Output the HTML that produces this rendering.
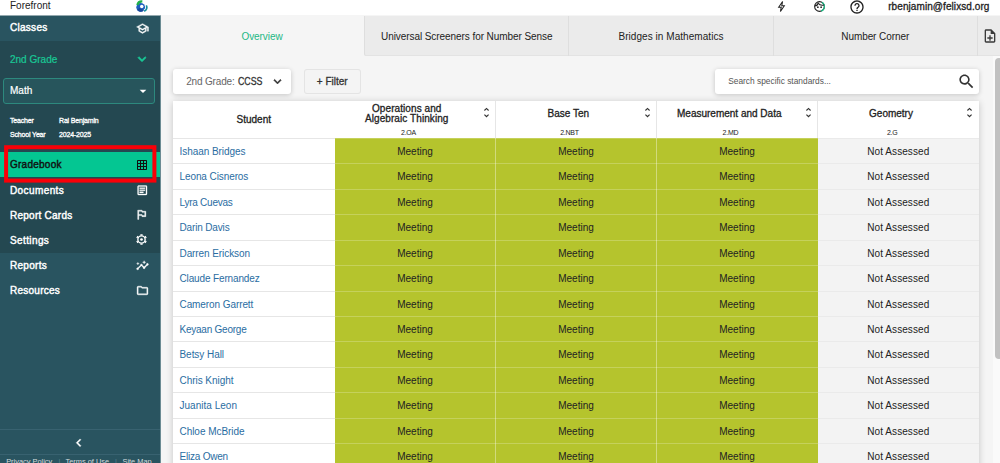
<!DOCTYPE html>
<html><head><meta charset="utf-8">
<style>
*{box-sizing:border-box;margin:0;padding:0}
html,body{width:1000px;height:463px;overflow:hidden;background:#f5f5f5;font-family:"Liberation Sans",sans-serif;color:#222}
.abs{position:absolute}
.med{-webkit-text-stroke:0.3px currentColor}
#top{position:absolute;left:0;top:0;width:1000px;height:15px;background:#fff}
#top .brand{position:absolute;left:10px;top:-2px;font-size:10px;color:#222;line-height:15px}
#top .mail{position:absolute;left:888.2px;top:-1.5px;font-size:10px;color:#222;line-height:15px;letter-spacing:.08px}
#side{position:absolute;left:0;top:15px;width:160px;height:448px;background:#295460;color:#fff}
#side .dark{position:absolute;left:0;top:26px;width:160px;height:211.5px;background:#244851}
.navt{position:absolute;left:10px;font-size:10px;letter-spacing:.28px;color:#fff;line-height:14px;white-space:nowrap}
.navt.med{-webkit-text-stroke:0.42px currentColor}
#mathbox{position:absolute;left:3px;top:63px;width:152px;height:25.5px;border:1px solid #2d897e;border-radius:3px;background:#27555c}
#grade{position:absolute;left:0;top:137px;width:160px;height:25px;background:#04c692}
#redbox{position:absolute;left:4.5px;top:130.5px;width:152px;height:37.5px;border:4px solid #e9001b}
.small{position:absolute;font-size:7px;letter-spacing:-.17px;color:#fff;line-height:9px;white-space:nowrap}
#foot{position:absolute;left:0;top:414px;width:160px;height:25.5px;border-top:1px solid #386270;border-bottom:1px solid #386270}
#foot2{position:absolute;left:0;top:441.500px;width:160px;font-size:7.4px;line-height:10px;color:#d3dbde;white-space:nowrap}
#foot2 span{position:absolute;top:0}
#main{position:absolute;left:160px;top:15px;width:840px;height:448px;background:#f5f5f5}
.tab{position:absolute;top:0.5px;height:40.5px;background:#ebebeb;border-left:1px solid #dedede;font-size:10px;letter-spacing:-.07px;text-align:center;line-height:41px;color:#222;white-space:nowrap;box-shadow:inset 0 -1px 0 #e3e3e3}
.tab.on{background:#f5f5f5;color:#1db885;border:none;box-shadow:none}
.btn{position:absolute;background:#fff;border-radius:3px;font-size:10px;line-height:25px;height:24.700px;white-space:nowrap}
#tbl{position:absolute;left:13px;top:85.5px;width:806px;height:380px;background:#fff;box-shadow:0 1px 7px rgba(0,0,0,.2)}
.hd{position:absolute;top:0;height:37.5px;text-align:center;font-size:10px;color:#222}
.hd .t{position:absolute;left:0;right:14.500px;white-space:nowrap}
.hd .sub{position:absolute;left:0;right:12px;top:28px;font-size:7px;letter-spacing:-.22px;line-height:8px;-webkit-text-stroke:0}
.sort{position:absolute;right:1.300px;top:5.700px}
.row{position:absolute;left:0;width:806px;height:25.45px}
.row:before{content:"";position:absolute;left:0;top:0;width:161.5px;height:1px;background:#e6e6e6}
.row .nm{position:absolute;left:6.5px;top:0;line-height:27.5px;font-size:10px;color:#2a6da2;white-space:nowrap;letter-spacing:.05px}
.cell{position:absolute;top:0;height:25.45px}
.cell:before{content:"";position:absolute;left:0;top:0;right:0;height:1px;background:rgba(255,255,255,.22)}
.ct{position:absolute;top:0;height:25.45px;line-height:27.5px;font-size:10px;text-align:center;color:#222}
.vl{position:absolute;top:37.500px;width:1px;height:345px;background:rgba(255,255,255,.38)}
.g{background:#b5c42d}
.n{background:#f3f3f3}
.n:before{background:#eaeaea}
</style></head><body>
<div id="top"><div class="brand">Forefront</div><div class="mail med">rbenjamin@felixsd.org</div>
<svg class="abs" style="left:135px;top:0" width="14" height="13" viewBox="0 0 14 13"><circle cx="5.700" cy="7.300" r="4.400" fill="#1e5fbe"/><path d="M2 9.800 A4.400 4.400 0 0 0 8.500 10.700 L7 8.500 A2 2 0 0 1 4.500 8 Z" fill="#17479a"/><path d="M11.300 5.300 C12.600 7.600 11.600 10.100 9.200 11.300" fill="none" stroke="#fff" stroke-width="3"/><path d="M11.300 5.300 C12.600 7.600 11.600 10.100 9.200 11.300" fill="none" stroke="#148c9c" stroke-width="1.700"/><path d="M2.400 5 A4.600 4.600 0 0 1 7.300 1.500" fill="none" stroke="#21b04b" stroke-width="2.300"/><circle cx="6.750" cy="6.600" r="1.750" fill="#fff"/></svg>
<svg class="abs" style="left:848.6px;top:-1.5px" width="16" height="16" viewBox="0 0 24 24"><path d="M11 18h2v-2h-2v2zm1-16C6.48 2 2 6.48 2 12s4.48 10 10 10 10-4.48 10-10S17.52 2 12 2zm0 18c-4.41 0-8-3.59-8-8s3.59-8 8-8 8 3.59 8 8-3.59 8-8 8zm0-14c-2.21 0-4 1.79-4 4h2c0-1.1.9-2 2-2s2 .9 2 2c0 2-3 1.75-3 5h2c0-2.25 3-2.5 3-5 0-2.21-1.79-4-4-4z" fill="#222"/></svg>
<svg class="abs" style="left:812.600px;top:0" width="13" height="13" viewBox="0 0 24 24"><circle cx="12" cy="12" r="9" fill="none" stroke="#222" stroke-width="2"/><path d="M16.500 4.200 A9 9 0 0 1 15 20.500" fill="none" stroke="#1db885" stroke-width="2.100"/><path d="M3.500 11 C7 10.300 9 8.500 9.600 6 C11.500 8.600 15.500 10.300 19.800 9.400" fill="none" stroke="#222" stroke-width="2.200"/><circle cx="9" cy="13.200" r="1.600" fill="#222"/><circle cx="15" cy="13.200" r="1.600" fill="#222"/></svg>
<svg class="abs" style="left:774.5px;top:-0.25px" width="13" height="13" viewBox="0 0 24 24"><path d="M14 2.800L6.800 13.200h4.700L10 21.200l7.200-10.400h-4.700z" fill="none" stroke="#222" stroke-width="1.900" stroke-linejoin="miter"/></svg>
</div>
<div id="side">
 <div class="dark"></div>
 <div class="navt med" style="top:6.4px">Classes</div>
 <div class="navt" style="top:37.7px;color:#19c896;letter-spacing:0;-webkit-text-stroke:.2px #19c896">2nd Grade</div>
 <div id="mathbox"><div class="navt" style="left:6px;top:5.400px;letter-spacing:0;-webkit-text-stroke:.2px #fff">Math</div></div>
 <div class="small med" style="left:10px;top:100.700px">Teacher</div><div class="small med" style="left:59px;top:100.700px">Rai Benjamin</div>
 <div class="small med" style="left:10px;top:115px">School Year</div><div class="small med" style="left:59px;top:115px">2024-2025</div>
 <div id="grade"><div class="navt med" style="top:6px;color:#111;letter-spacing:.25px">Gradebook</div></div>
 <svg class="abs" style="left:0;top:125px" width="160" height="50" viewBox="0 0 160 50"><rect x="6.100" y="7.200" width="148.300" height="33.400" fill="none" stroke="#fa0008" stroke-width="4"/></svg>
 <div class="navt med" style="top:168.600px;letter-spacing:.4px">Documents</div>
 <div class="navt med" style="top:193.700px;letter-spacing:.25px">Report Cards</div>
 <div class="navt med" style="top:218.700px;letter-spacing:.39px">Settings</div>
 <div class="navt med" style="top:243.700px">Reports</div>
 <div class="navt med" style="top:268.700px;letter-spacing:.25px">Resources</div>
 <svg class="abs" style="left:135.5px;top:6.6px" width="13" height="13" viewBox="0 0 24 24"><path d="M12 3L1 9l4 2.18v6L12 21l7-3.82v-6l2-1.09V17h2V9L12 3zm6.82 6L12 12.72 5.18 9 12 5.28 18.82 9zM17 15.99l-5 2.73-5-2.73v-3.72L12 15l5-2.73v3.72z" fill="#fff" stroke="#fff" stroke-width="0.7"/></svg>
 <svg class="abs" style="left:133.9px;top:36.1px" width="16" height="16" viewBox="0 0 24 24"><path d="M16.59 8.59L12 13.17 7.41 8.59 6 10l6 6 6-6z" fill="#19c896" stroke="#19c896" stroke-width="1.1"/></svg>
 <svg class="abs" style="left:135.4px;top:67.8px" width="16" height="16" viewBox="0 0 24 24"><path d="M7 10l5 5 5-5z" fill="#fff"/></svg>
 <svg class="abs" style="left:136px;top:144.3px" width="12" height="12" viewBox="0 0 24 24"><path d="M20 2H4c-1.1 0-2 .9-2 2v16c0 1.1.9 2 2 2h16c1.1 0 2-.9 2-2V4c0-1.1-.9-2-2-2zM8 20H4v-4h4v4zm0-6H4v-4h4v4zm0-6H4V4h4v4zm6 12h-4v-4h4v4zm0-6h-4v-4h4v4zm0-6h-4V4h4v4zm6 12h-4v-4h4v4zm0-6h-4v-4h4v4zm0-6h-4V4h4v4z" fill="#111"/></svg>
 <svg class="abs" style="left:135.6px;top:168.8px" width="12.6" height="12.6" viewBox="0 0 24 24"><path d="M19 5v14H5V5h14m0-2H5c-1.1 0-2 .9-2 2v14c0 1.1.9 2 2 2h14c1.1 0 2-.9 2-2V5c0-1.1-.9-2-2-2zM14 17H7v-2h7v2zm3-4H7v-2h10v2zm0-4H7V7h10v2z" fill="#fff" stroke="#fff" stroke-width="0.6"/></svg>
 <svg class="abs" style="left:135.4px;top:193.2px" width="13" height="13" viewBox="0 0 24 24"><path d="M14 6l-1-2H5v17h2v-7h5l1 2h7V6h-6zm4 8h-4l-1-2H7V6h5l1 2h5v6z" fill="#fff" stroke="#fff" stroke-width="0.7"/></svg>
 <svg class="abs" style="left:135.300px;top:218.300px" width="13" height="13" viewBox="0 0 24 24"><circle cx="12" cy="12" r="6.700" fill="none" stroke="#fff" stroke-width="2.500"/><path d="M12.00 4.40L12.00 2.10M5.42 8.20L3.43 7.05M5.42 15.80L3.43 16.95M12.00 19.60L12.00 21.90M18.58 15.80L20.57 16.95M18.58 8.20L20.57 7.05" fill="none" stroke="#fff" stroke-width="4.200"/><circle cx="12" cy="12" r="2.500" fill="#fff"/></svg>
 <svg class="abs" style="left:135.5px;top:244px" width="13" height="13" viewBox="0 0 24 24"><path d="M21 8c-1.45 0-2.26 1.44-1.93 2.51l-3.55 3.56c-.3-.09-.74-.09-1.04 0l-2.55-2.55C12.27 10.45 11.46 9 10 9c-1.45 0-2.27 1.44-1.93 2.52l-4.56 4.55C2.44 15.74 1 16.55 1 18c0 1.1.9 2 2 2 1.45 0 2.26-1.44 1.93-2.51l4.55-4.56c.3.09.74.09 1.04 0l2.55 2.55C12.73 16.55 13.54 18 15 18c1.45 0 2.27-1.44 1.93-2.52l3.56-3.55c1.07.33 2.51-.48 2.51-1.93 0-1.1-.9-2-2-2zM15 9l.94-2.07L18 6l-2.06-.93L15 3l-.92 2.07L12 6l2.08.93zM3.5 11L4 9l2-.5L4 8l-.5-2L3 8l-2 .5L3 9z" fill="#fff" stroke="#fff" stroke-width="0.5"/></svg>
 <svg class="abs" style="left:135.5px;top:269.1px" width="13" height="13" viewBox="0 0 24 24"><path d="M9.17 6l2 2H20v10H4V6h5.17M10 4H4c-1.1 0-1.99.9-1.99 2L2 18c0 1.1.9 2 2 2h16c1.1 0 2-.9 2-2V8c0-1.1-.9-2-2-2h-8l-2-2z" fill="#fff" stroke="#fff" stroke-width="0.7"/></svg>
 <div id="foot"></div>
 <svg class="abs" style="left:71.4px;top:419.65px" width="15.5" height="15.5" viewBox="0 0 24 24"><path d="M15.41 7.41L14 6l-6 6 6 6 1.41-1.41L10.83 12z" fill="#fff" stroke="#fff" stroke-width="0.6"/></svg>
 <div id="foot2"><span style="left:6.200px">Privacy Policy</span><span style="left:58.500px;color:#55808d">|</span><span style="left:65.500px">Terms of Use</span><span style="left:115px;color:#55808d">|</span><span style="left:122.500px">Site Map</span></div>
</div>
<div class="abs" style="left:160px;top:15px;width:1px;height:448px;background:#6b8b93;z-index:5"></div>
<div class="abs" style="left:0;top:15px;width:161px;height:1px;background:#94a9af;z-index:5"></div>
<div id="main">
 <div class="tab on" style="left:0;width:204px">Overview</div>
 <div class="tab" style="left:204px;width:204.500px;border-bottom-left-radius:2px">Universal Screeners for Number Sense</div>
 <div class="tab" style="left:408px;width:205px;letter-spacing:.05px">Bridges in Mathematics</div>
 <div class="tab" style="left:613px;width:203.500px">Number Corner</div>
 <div class="tab" style="left:816.500px;width:23.500px"></div>
 <svg class="abs" style="left:821.8px;top:13px" width="16" height="16" viewBox="0 0 24 24"><path d="M13 11h-2v3H8v2h3v3h2v-3h3v-2h-3zm1-9H6c-1.100 0-2 .9-2 2v16c0 1.100.89 2 1.990 2H18c1.100 0 2-.9 2-2V8l-6-6zm4 18H6V4h7v5h5v11z" fill="#3a3a3a"/></svg>
 <div class="btn" style="left:13px;top:54.200px;width:118px;padding-left:13.200px;color:#666;letter-spacing:-.17px;box-shadow:0 1px 5px rgba(0,0,0,.2)">2nd Grade: <span class="med" style="position:absolute;left:65px;top:0;color:#333;letter-spacing:0;transform:scaleX(.88);transform-origin:0 50%">CCSS</span></div>
 <svg class="abs" style="left:110px;top:59.2px" width="15" height="15" viewBox="0 0 24 24"><path d="M16.59 8.59L12 13.17 7.41 8.59 6 10l6 6 6-6z" fill="#333" stroke="#333" stroke-width="0.7"/></svg>
 <div class="btn med" style="left:143.750px;top:54.200px;width:57px;height:25px;font-size:10px;text-align:center;background:#f4f4f4;box-shadow:inset 0 0 0 1px #e4e4e4;line-height:25px;color:#333">+ Filter</div>
 <div class="btn" style="left:555px;top:54.200px;width:264px;padding-left:13.200px;font-size:8.370px;color:#555;box-shadow:0 1px 5px rgba(0,0,0,.2)">Search specific standards...</div>
 <svg class="abs" style="left:797.1px;top:57.3px" width="19" height="19" viewBox="0 0 24 24"><path d="M15.500 14h-.79l-.28-.27C15.410 12.590 16 11.110 16 9.500 16 5.910 13.090 3 9.500 3S3 5.910 3 9.500 5.910 16 9.500 16c1.610 0 3.090-.59 4.230-1.570l.27.28v.79l5 4.990L20.490 19l-4.990-5zm-6 0C7.010 14 5 11.990 5 9.500S7.010 5 9.500 5 14 7.010 14 9.500 11.990 14 9.500 14z" fill="#333"/></svg>
 <div id="tbl">
  <div class="hd med" style="left:0;width:161.500px"><div class="t" style="right:0;top:13px;line-height:12px">Student</div></div>
  <div class="hd med" style="left:161.500px;width:161px;border-right:1px solid #e6e6e6"><div class="t" style="top:3.500px;line-height:9.800px;letter-spacing:.08px;right:15.500px">Operations and<br>Algebraic Thinking</div><div class="sub">2.OA</div><svg class="sort" width="13" height="13" viewBox="0 0 24 24"><path d="M12 5.830L15.170 9l1.410-1.410L12 3 7.410 7.590 8.830 9 12 5.830zm0 12.340L8.830 15l-1.410 1.410L12 21l4.590-4.590L15.170 15 12 18.170z" fill="#333"/></svg></div>
  <div class="hd med" style="left:322.500px;width:161px;border-right:1px solid #e6e6e6"><div class="t" style="top:7.500px;line-height:12px">Base Ten</div><div class="sub">2.NBT</div><svg class="sort" width="13" height="13" viewBox="0 0 24 24"><path d="M12 5.830L15.170 9l1.410-1.410L12 3 7.410 7.590 8.830 9 12 5.830zm0 12.340L8.830 15l-1.410 1.410L12 21l4.590-4.590L15.170 15 12 18.170z" fill="#333"/></svg></div>
  <div class="hd med" style="left:483.500px;width:161px;border-right:1px solid #e6e6e6"><div class="t" style="top:7.500px;line-height:12px">Measurement and Data</div><div class="sub">2.MD</div><svg class="sort" width="13" height="13" viewBox="0 0 24 24"><path d="M12 5.830L15.170 9l1.410-1.410L12 3 7.410 7.590 8.830 9 12 5.830zm0 12.340L8.830 15l-1.410 1.410L12 21l4.590-4.590L15.170 15 12 18.170z" fill="#333"/></svg></div>
  <div class="hd med" style="left:644.500px;width:161.500px"><div class="t" style="top:7.500px;line-height:12px">Geometry</div><div class="sub">2.G</div><svg class="sort" style="right:3.200px" width="13" height="13" viewBox="0 0 24 24"><path d="M12 5.830L15.170 9l1.410-1.410L12 3 7.410 7.590 8.830 9 12 5.830zm0 12.340L8.830 15l-1.410 1.410L12 21l4.590-4.590L15.170 15 12 18.170z" fill="#333"/></svg></div>
  <div class="row" style="top:37.50px"><div class="nm" style="letter-spacing:-0.05px">Ishaan Bridges</div><div class="cell g" style="left:161.5px;width:483px"></div><div class="cell n" style="left:644.5px;width:161.5px"></div><div class="ct" style="left:161.5px;width:161px">Meeting</div><div class="ct" style="left:322.5px;width:161px">Meeting</div><div class="ct" style="left:483.5px;width:161px">Meeting</div><div class="ct" style="left:644.5px;width:161.5px;letter-spacing:.08px">Not Assessed</div></div>
  <div class="row" style="top:62.92px"><div class="nm" style="letter-spacing:-0.093px">Leona Cisneros</div><div class="cell g" style="left:161.5px;width:483px"></div><div class="cell n" style="left:644.5px;width:161.5px"></div><div class="ct" style="left:161.5px;width:161px">Meeting</div><div class="ct" style="left:322.5px;width:161px">Meeting</div><div class="ct" style="left:483.5px;width:161px">Meeting</div><div class="ct" style="left:644.5px;width:161.5px;letter-spacing:.08px">Not Assessed</div></div>
  <div class="row" style="top:88.34px"><div class="nm" style="letter-spacing:-0.25px">Lyra Cuevas</div><div class="cell g" style="left:161.5px;width:483px"></div><div class="cell n" style="left:644.5px;width:161.5px"></div><div class="ct" style="left:161.5px;width:161px">Meeting</div><div class="ct" style="left:322.5px;width:161px">Meeting</div><div class="ct" style="left:483.5px;width:161px">Meeting</div><div class="ct" style="left:644.5px;width:161.5px;letter-spacing:.08px">Not Assessed</div></div>
  <div class="row" style="top:113.76px"><div class="nm" style="letter-spacing:-0.15px">Darin Davis</div><div class="cell g" style="left:161.5px;width:483px"></div><div class="cell n" style="left:644.5px;width:161.5px"></div><div class="ct" style="left:161.5px;width:161px">Meeting</div><div class="ct" style="left:322.5px;width:161px">Meeting</div><div class="ct" style="left:483.5px;width:161px">Meeting</div><div class="ct" style="left:644.5px;width:161.5px;letter-spacing:.08px">Not Assessed</div></div>
  <div class="row" style="top:139.18px"><div class="nm" style="letter-spacing:-0.08px">Darren Erickson</div><div class="cell g" style="left:161.5px;width:483px"></div><div class="cell n" style="left:644.5px;width:161.5px"></div><div class="ct" style="left:161.5px;width:161px">Meeting</div><div class="ct" style="left:322.5px;width:161px">Meeting</div><div class="ct" style="left:483.5px;width:161px">Meeting</div><div class="ct" style="left:644.5px;width:161.5px;letter-spacing:.08px">Not Assessed</div></div>
  <div class="row" style="top:164.60px"><div class="nm" style="letter-spacing:-0.14px">Claude Fernandez</div><div class="cell g" style="left:161.5px;width:483px"></div><div class="cell n" style="left:644.5px;width:161.5px"></div><div class="ct" style="left:161.5px;width:161px">Meeting</div><div class="ct" style="left:322.5px;width:161px">Meeting</div><div class="ct" style="left:483.5px;width:161px">Meeting</div><div class="ct" style="left:644.5px;width:161.5px;letter-spacing:.08px">Not Assessed</div></div>
  <div class="row" style="top:190.02px"><div class="nm" style="letter-spacing:-0.085px">Cameron Garrett</div><div class="cell g" style="left:161.5px;width:483px"></div><div class="cell n" style="left:644.5px;width:161.5px"></div><div class="ct" style="left:161.5px;width:161px">Meeting</div><div class="ct" style="left:322.5px;width:161px">Meeting</div><div class="ct" style="left:483.5px;width:161px">Meeting</div><div class="ct" style="left:644.5px;width:161.5px;letter-spacing:.08px">Not Assessed</div></div>
  <div class="row" style="top:215.44px"><div class="nm" style="letter-spacing:-0.235px">Keyaan George</div><div class="cell g" style="left:161.5px;width:483px"></div><div class="cell n" style="left:644.5px;width:161.5px"></div><div class="ct" style="left:161.5px;width:161px">Meeting</div><div class="ct" style="left:322.5px;width:161px">Meeting</div><div class="ct" style="left:483.5px;width:161px">Meeting</div><div class="ct" style="left:644.5px;width:161.5px;letter-spacing:.08px">Not Assessed</div></div>
  <div class="row" style="top:240.86px"><div class="nm" style="letter-spacing:-0.05px">Betsy Hall</div><div class="cell g" style="left:161.5px;width:483px"></div><div class="cell n" style="left:644.5px;width:161.5px"></div><div class="ct" style="left:161.5px;width:161px">Meeting</div><div class="ct" style="left:322.5px;width:161px">Meeting</div><div class="ct" style="left:483.5px;width:161px">Meeting</div><div class="ct" style="left:644.5px;width:161.5px;letter-spacing:.08px">Not Assessed</div></div>
  <div class="row" style="top:266.28px"><div class="nm" style="letter-spacing:-0.04px">Chris Knight</div><div class="cell g" style="left:161.5px;width:483px"></div><div class="cell n" style="left:644.5px;width:161.5px"></div><div class="ct" style="left:161.5px;width:161px">Meeting</div><div class="ct" style="left:322.5px;width:161px">Meeting</div><div class="ct" style="left:483.5px;width:161px">Meeting</div><div class="ct" style="left:644.5px;width:161.5px;letter-spacing:.08px">Not Assessed</div></div>
  <div class="row" style="top:291.70px"><div class="nm" style="letter-spacing:0.02px">Juanita Leon</div><div class="cell g" style="left:161.5px;width:483px"></div><div class="cell n" style="left:644.5px;width:161.5px"></div><div class="ct" style="left:161.5px;width:161px">Meeting</div><div class="ct" style="left:322.5px;width:161px">Meeting</div><div class="ct" style="left:483.5px;width:161px">Meeting</div><div class="ct" style="left:644.5px;width:161.5px;letter-spacing:.08px">Not Assessed</div></div>
  <div class="row" style="top:317.12px"><div class="nm" style="letter-spacing:-0.045px">Chloe McBride</div><div class="cell g" style="left:161.5px;width:483px"></div><div class="cell n" style="left:644.5px;width:161.5px"></div><div class="ct" style="left:161.5px;width:161px">Meeting</div><div class="ct" style="left:322.5px;width:161px">Meeting</div><div class="ct" style="left:483.5px;width:161px">Meeting</div><div class="ct" style="left:644.5px;width:161.5px;letter-spacing:.08px">Not Assessed</div></div>
  <div class="row" style="top:342.54px"><div class="nm" style="letter-spacing:-0.21px">Eliza Owen</div><div class="cell g" style="left:161.5px;width:483px"></div><div class="cell n" style="left:644.5px;width:161.5px"></div><div class="ct" style="left:161.5px;width:161px">Meeting</div><div class="ct" style="left:322.5px;width:161px">Meeting</div><div class="ct" style="left:483.5px;width:161px">Meeting</div><div class="ct" style="left:644.5px;width:161.5px;letter-spacing:.08px">Not Assessed</div></div>
  <div class="vl" style="left:322px"></div><div class="vl" style="left:483px"></div>
 </div>
 <div class="abs" style="left:833px;top:41px;width:7px;height:407px;background:#fafafa"></div>
 <div class="abs" style="left:834.800px;top:43.400px;width:8px;height:301px;background:#c1c1c1;border-radius:4px"></div>
</div>
</body></html>
